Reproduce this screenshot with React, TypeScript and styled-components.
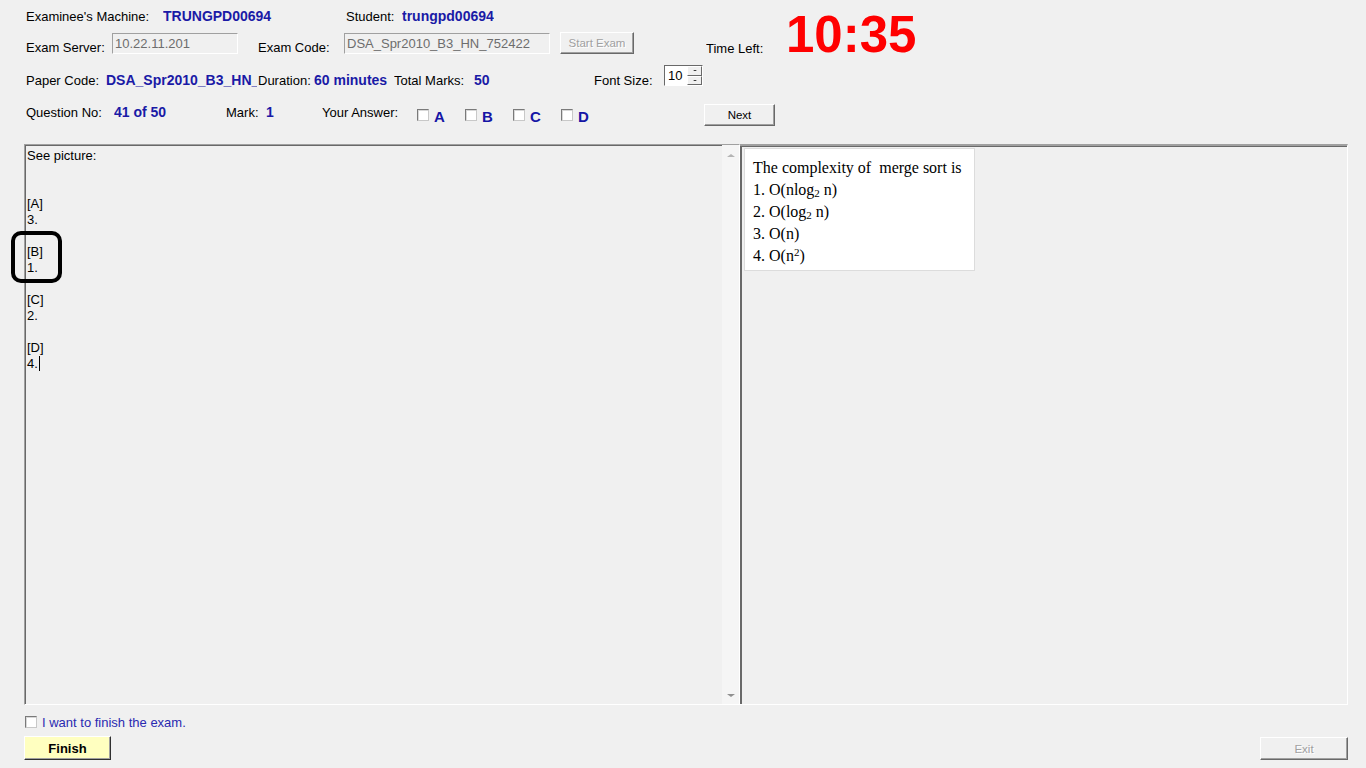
import React from 'react';
import styled, { createGlobalStyle } from 'styled-components';

const GlobalStyle = createGlobalStyle`
  html, body {
    margin: 0;
    padding: 0;
    background: #f0f0f0;
  }
  body {
    font-family: 'Liberation Sans', Arial, sans-serif;
    font-size: 13px;
    color: #000;
  }
`;

const Window = styled.div`
  position: relative;
  width: 1366px;
  height: 768px;
  overflow: hidden;
  display: flex;
  flex-direction: column;
  background: #f0f0f0;
`;

const Top = styled.div`
  display: flex;
`;

const Stack = styled.div`
  width: 786px;
  display: flex;
  flex-direction: column;
`;

const Row = styled.div<{ $h: number; $mt?: number }>`
  display: flex;
  align-items: center;
  height: ${(p) => p.$h}px;
  margin-top: ${(p) => p.$mt ?? 0}px;
  padding-left: 26px;
`;

const Cell = styled.div<{ $w?: number; $ml?: number; $drop?: number }>`
  flex: none;
  width: ${(p) => (p.$w ? `${p.$w}px` : 'auto')};
  margin-left: ${(p) => p.$ml ?? 0}px;
  white-space: nowrap;
  overflow: hidden;
  padding-top: ${(p) => (p.$drop && p.$drop > 0 ? p.$drop : 0)}px;
  padding-bottom: ${(p) => (p.$drop && p.$drop < 0 ? -p.$drop : 0)}px;
`;

const Value = styled(Cell)`
  font-weight: bold;
  font-size: 14px;
  color: #1a1aa6;
`;

const Clock = styled.div`
  margin-top: 9px;
  height: 51px;
  line-height: 51px;
  font-size: 51px;
  font-weight: bold;
  color: #ff0000;
`;

const TextBox = styled.div<{ $w: number; $ml?: number }>`
  flex: none;
  box-sizing: border-box;
  width: ${(p) => p.$w}px;
  height: 21px;
  margin-left: ${(p) => p.$ml ?? 0}px;
  padding: 2px 0 0 2px;
  border: 1px solid;
  border-color: #a0a0a0 #ffffff #ffffff #a0a0a0;
  background: #f0f0f0;
  color: #6d6d6d;
  font-size: 13px;
  line-height: 15px;
  white-space: nowrap;
  overflow: hidden;
`;

const Button = styled.div<{
  $w: number;
  $h: number;
  $ml?: number;
  $off?: boolean;
  $primary?: boolean;
}>`
  flex: none;
  box-sizing: border-box;
  display: flex;
  align-items: center;
  justify-content: center;
  width: ${(p) => p.$w}px;
  height: ${(p) => p.$h}px;
  margin-left: ${(p) => p.$ml ?? 0}px;
  background: ${(p) => (p.$primary ? '#ffffc0' : '#f0f0f0')};
  border: 1px solid;
  border-color: #ffffff ${(p) => (p.$primary ? '#303030' : '#696969')}
    ${(p) => (p.$primary ? '#303030' : '#696969')} #ffffff;
  box-shadow: inset -1px -1px 0 #a0a0a0;
  color: ${(p) => (p.$off ? '#a0a0a0' : '#000')};
  font-size: ${(p) => (p.$primary ? '13px' : '11.5px')};
  font-weight: ${(p) => (p.$primary ? 'bold' : 'normal')};
  text-shadow: ${(p) => (p.$off ? '1px 1px 0 #ffffff' : 'none')};
`;

const Spinner = styled.div`
  flex: none;
  align-self: flex-start;
  box-sizing: border-box;
  display: flex;
  width: 39px;
  height: 21px;
  border: 1px solid;
  border-color: #696969 #ffffff #ffffff #696969;
  background: #ffffff;
`;

const SpinValue = styled.div`
  flex: 1;
  padding: 2px 0 0 3px;
  font-size: 13px;
  line-height: 15px;
`;

const SpinButtons = styled.div`
  width: 15px;
  display: flex;
  flex-direction: column;
`;

const SpinButton = styled.div`
  flex: 1;
  display: flex;
  align-items: center;
  justify-content: center;
  background: #f0f0f0;
  border: 1px solid;
  border-color: #ffffff #696969 #696969 #ffffff;
`;

const Arrow = styled.span<{ $dir: 'up' | 'down'; $color?: string; $size?: number }>`
  width: 0;
  height: 0;
  border-left: ${(p) => p.$size ?? 3}px solid transparent;
  border-right: ${(p) => p.$size ?? 3}px solid transparent;
  ${(p) =>
    p.$dir === 'up'
      ? `border-bottom: ${(p.$size ?? 3) - 1}px solid ${p.$color ?? '#000'};`
      : `border-top: ${(p.$size ?? 3) - 1}px solid ${p.$color ?? '#000'};`}
`;

const Choice = styled.div`
  flex: none;
  width: 48px;
  display: flex;
  align-items: center;
  gap: 5px;
`;

const Box = styled.span`
  flex: none;
  box-sizing: border-box;
  width: 12px;
  height: 12px;
  border: 1px solid;
  border-color: #7a7a7a #c8c8c8 #c8c8c8 #7a7a7a;
  background: #ffffff;
  box-shadow: inset 1px 1px 0 #d8d8d8;
`;

const Letter = styled.span`
  padding-top: 2px;
  font-size: 15px;
  font-weight: bold;
  color: #1515a5;
`;

const Main = styled.div`
  position: relative;
  display: flex;
  height: 561px;
  margin-top: 14px;
  padding-left: 24px;
`;

const Sunken = styled.div<{ $w: number }>`
  box-sizing: border-box;
  width: ${(p) => p.$w}px;
  height: 100%;
  display: flex;
  border: 1px solid;
  border-color: #a0a0a0 #ffffff #ffffff #a0a0a0;
  box-shadow: inset 1px 1px 0 #696969;
`;

const Editor = styled(Sunken)``;

const EditorText = styled.div`
  flex: 1;
  padding: 3px 0 0 2px;
  white-space: pre;
  line-height: 16px;
  font-size: 13px;
`;

const Caret = styled.span`
  display: inline-block;
  width: 1px;
  height: 15px;
  margin-left: 1px;
  vertical-align: -3px;
  background: #000;
`;

const ScrollBar = styled.div`
  width: 17px;
  display: flex;
  flex-direction: column;
  justify-content: space-between;
  align-items: center;
  background: #f5f5f5;
  padding: 9px 0 7px;
`;

const Highlight = styled.div`
  position: absolute;
  left: 11px;
  top: 87px;
  width: 51px;
  height: 52px;
  box-sizing: border-box;
  border: 4px solid #000;
  border-radius: 10px;
`;

const Viewer = styled(Sunken)`
  border-left: none;
  border-top-width: 2px;
  border-top-color: #a0a0a0;
  box-shadow: inset 2px 1px 0 #696969;
  align-items: flex-start;
  padding: 2px 0 0 4px;
`;

const Picture = styled.div`
  box-sizing: border-box;
  width: 231px;
  height: 123px;
  padding: 8px 0 0 8px;
  background: #ffffff;
  border: 1px solid #dcdcdc;
  font-family: 'Liberation Serif', 'Times New Roman', serif;
  font-size: 16px;
  line-height: 22px;
  white-space: pre;
  color: #000;
`;

const PicLine = styled.div`
  height: 22px;
`;

const Sub = styled.span`
  font-size: 11px;
  vertical-align: -2px;
  line-height: 11px;
`;

const Sup = styled.span`
  font-size: 11px;
  vertical-align: 5px;
  line-height: 11px;
`;

const CheckRow = styled.div`
  display: flex;
  align-items: center;
  gap: 5px;
  height: 16px;
  margin-top: 9px;
  padding-left: 25px;
`;

const CheckLabel = styled.span`
  color: #2a2ab0;
  font-size: 13px;
`;

const Footer = styled.div`
  display: flex;
  justify-content: space-between;
  align-items: flex-start;
  height: 24px;
  margin-top: 6px;
  padding: 0 18px 0 24px;
`;

const ExitSlot = styled.div`
  padding-top: 1px;
`;

const questionText = 'See picture:\n\n\n[A]\n3.\n\n[B]\n1.\n\n[C]\n2.\n\n[D]\n4.';

const App = () => {
  return (
    <Window>
      <GlobalStyle />
      <Top>
        <Stack>
          <Row $h={20} $mt={6}>
            <Cell $w={137}>Examinee's Machine:</Cell>
            <Value $w={183}>TRUNGPD00694</Value>
            <Cell $w={56}>Student:</Cell>
            <Value>trungpd00694</Value>
          </Row>
          <Row $h={26} $mt={4}>
            <Cell $w={86} $drop={8}>
              Exam Server:
            </Cell>
            <TextBox $w={126}>10.22.11.201</TextBox>
            <Cell $w={86} $ml={20} $drop={8}>
              Exam Code:
            </Cell>
            <TextBox $w={206}>DSA_Spr2010_B3_HN_752422</TextBox>
            <Button $w={74} $h={22} $ml={10} $off>
              Start Exam
            </Button>
            <Cell $ml={72} $drop={10}>
              Time Left:
            </Cell>
          </Row>
        </Stack>
        <Clock>10:35</Clock>
      </Top>

      <Row $h={30} $mt={5}>
        <Cell $w={80}>Paper Code:</Cell>
        <Value $w={151}>DSA_Spr2010_B3_HN_752422</Value>
        <Cell $w={56} $ml={1}>
          Duration:
        </Cell>
        <Value $w={80}>60 minutes</Value>
        <Cell $w={80}>Total Marks:</Cell>
        <Value $w={120}>50</Value>
        <Cell $w={70}>Font Size:</Cell>
        <Spinner>
          <SpinValue>10</SpinValue>
          <SpinButtons>
            <SpinButton>
              <Arrow $dir="up" $size={2} />
            </SpinButton>
            <SpinButton>
              <Arrow $dir="down" $size={2} />
            </SpinButton>
          </SpinButtons>
        </Spinner>
      </Row>

      <Row $h={30} $mt={5}>
        <Cell $w={88} $drop={-6}>
          Question No:
        </Cell>
        <Value $w={112} $drop={-6}>
          41 of 50
        </Value>
        <Cell $w={40} $drop={-6}>
          Mark:
        </Cell>
        <Value $w={56} $drop={-6}>
          1
        </Value>
        <Cell $w={95} $drop={-6}>
          Your Answer:
        </Cell>
        {['A', 'B', 'C', 'D'].map((l) => (
          <Choice key={l}>
            <Box />
            <Letter>{l}</Letter>
          </Choice>
        ))}
        <Button $w={71} $h={22} $ml={95}>
          Next
        </Button>
      </Row>

      <Main>
        <Editor $w={716}>
          <EditorText>
            {questionText}
            <Caret />
          </EditorText>
          <ScrollBar>
            <Arrow $dir="up" $color="#b4b4b4" $size={4} />
            <Arrow $dir="down" $color="#909090" $size={4} />
          </ScrollBar>
        </Editor>
        <Viewer $w={608}>
          <Picture>
            <PicLine>The complexity of  merge sort is</PicLine>
            <PicLine>
              1. O(nlog<Sub>2</Sub> n)
            </PicLine>
            <PicLine>
              2. O(log<Sub>2</Sub> n)
            </PicLine>
            <PicLine>3. O(n)</PicLine>
            <PicLine>
              4. O(n<Sup>2</Sup>)
            </PicLine>
          </Picture>
        </Viewer>
        <Highlight />
      </Main>

      <CheckRow>
        <Box />
        <CheckLabel>I want to finish the exam.</CheckLabel>
      </CheckRow>

      <Footer>
        <Button $w={87} $h={24} $primary>
          Finish
        </Button>
        <ExitSlot>
          <Button $w={88} $h={23} $off>
            Exit
          </Button>
        </ExitSlot>
      </Footer>
    </Window>
  );
};

export default App;
